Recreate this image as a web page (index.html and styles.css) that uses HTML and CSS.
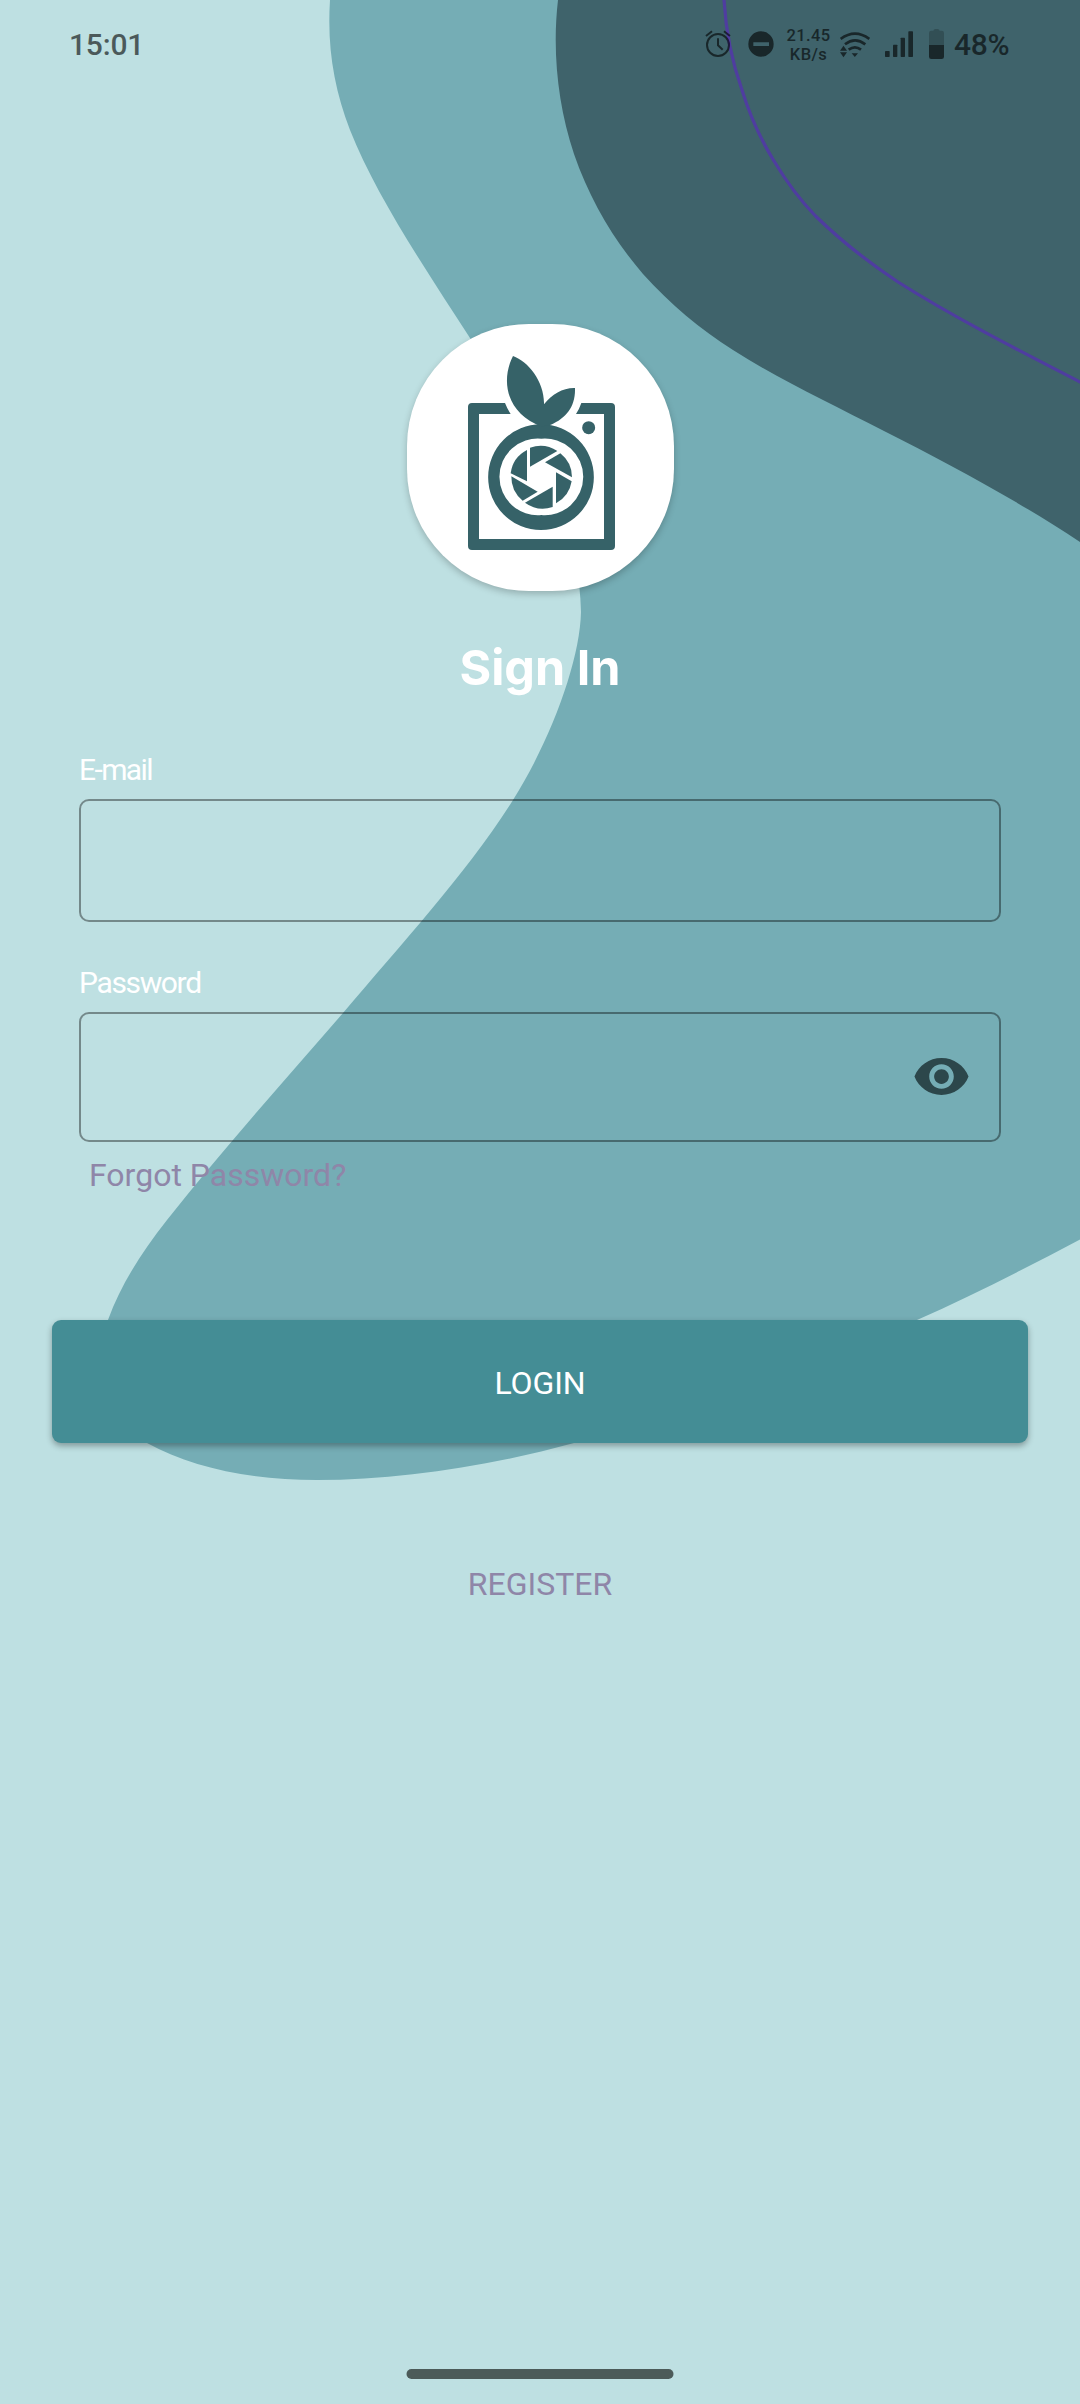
FILE: index.html
```html
<!DOCTYPE html>
<html lang="en">
<head>
<meta charset="utf-8">
<title>Sign In</title>
<link rel="stylesheet" href="styles.css">
</head>
<body>
<div class="screen">
  <svg class="backdrop" viewBox="0 0 1080 2404" aria-hidden="true">
    <path class="wave-mid" d="M330 0C327 48 334 88 350 130C376 196 428 273 470 338C535 438 579 520 581 612C580 660 552 738 513 800C466 874 402 943 343 1013C285 1080 222 1150 167 1220C142 1252 121 1284 108 1320C92 1366 98 1414 147 1443C192 1468 252 1480 317 1480C400 1480 490 1466 574 1443C690 1412 805 1371 917 1320C971 1296 1026 1268 1080 1239.5V0Z"/>
    <path class="wave-dark" d="M558 0C552 52 558 106 574 154C590 200 613 239 643 274C670 304 700 329 733 350C780 380 832 404 884 431C953 466 1020 502 1080 542V0Z"/>
    <path class="wave-line" d="M724 -2V0C726 33 732 62 742 90C750 116 761 140 774 161C786 181 800 200 815.5 216C840 240 868 262 898 282C955 318 1018 350 1082 383"/>
  </svg>

  <header class="status-bar">
    <span class="clock">15:01</span>
    <div class="status-icons">
      <svg class="alarm" viewBox="75 90 78 84">
        <g fill="none" stroke="#000" stroke-width="6">
          <circle cx="114" cy="135" r="33"/>
          <path d="M114 115V136L128 149"/>
          <path d="M78 108L96 94M150 108L132 94"/>
        </g>
      </svg>
      <svg class="dnd" viewBox="204 93 78 78">
        <path fill-rule="evenodd" d="M243 94a38 38 0 1 0 0 76a38 38 0 1 0 0-76ZM220 127H267V138H220Z"/>
      </svg>
      <div class="speed"><span>21.45</span><span>KB/s</span></div>
      <svg class="wifi" viewBox="480 90 90 81">
        <g fill="none" stroke="#000" stroke-width="8">
          <path d="M482 114Q525 82 568 114"/>
          <path d="M495 130Q525 106 556 130"/>
          <path d="M506 146Q525 132 543 146"/>
        </g>
        <path d="M515 157H534L524.500 168ZM480 149L490.500 134L501 149ZM480 154H501L490.500 169Z"/>
      </svg>
      <svg class="signal" viewBox="615 93 84 78">
        <rect x="615" y="153" width="14" height="18" rx="2"/>
        <rect x="639" y="134" width="13" height="37" rx="2"/>
        <rect x="662" y="113" width="13" height="58" rx="2"/>
        <rect x="685" y="94" width="14" height="77" rx="2"/>
      </svg>
      <svg class="battery" viewBox="747 87 45 90">
        <path fill-opacity=".33" d="M747 135V99Q747 92 754 92H760Q761 87 766 87H773Q778 87 779 92H785Q792 92 792 99V135Z"/>
        <path d="M747 135H792V170Q792 177 785 177H754Q747 177 747 170Z"/>
      </svg>
      <span class="percent">48%</span>
    </div>
  </header>

  <main class="content">
    <div class="logo">
      <svg viewBox="51 42 801 801" aria-label="Logo">
        <g fill="#366268">
          <path d="M345 279H246Q234 279 234 291V708Q234 720 246 720H663Q675 720 675 708V291Q675 279 663 279H574Q568 297 558 312H642V687H267V312H362Q352 297 345 279Z"/>
          <path fill-rule="evenodd" d="M453 343a158 158 0 1 0 0 317a158 158 0 1 0 0-317ZM454 386a115 115 0 1 1 0 229a115 115 0 1 1 0-229Z"/>
          <path d="M369 138C415 154 464 216 462 283C487 252 518 233 555 234C557 290 528 325 483 344L453 350L437 342C350 301 332 212 369 138Z"/>
          <circle cx="596" cy="353" r="19.500"/>
          <path d="M420 413A92 92 0 0 1 502 423L420 470Z"/>
          <path d="M511 430A92 92 0 0 1 546 502L465 457Z"/>
          <path d="M498 487L545 514A92 92 0 0 1 498 580Z"/>
          <path d="M488 530V591A92 92 0 0 1 405 578Z"/>
          <path d="M364 499L443 545L398 572A92 92 0 0 1 364 499Z"/>
          <path d="M411 420V514L362 490A92 92 0 0 1 411 420Z"/>
        </g>
      </svg>
    </div>
    <h1 class="title">Sign In</h1>

    <form class="form">
      <label class="label label-email" for="email">E-mail</label>
      <div class="field field-email"><input id="email" type="email"></div>
      <label class="label label-password" for="password">Password</label>
      <div class="field field-password">
        <input id="password" type="password">
        <svg class="eye" viewBox="0 0 24 24"><path d="M12 4.500C7 4.500 2.730 7.610 1 12c1.730 4.390 6 7.500 11 7.500s9.270-3.110 11-7.500c-1.730-4.390-6-7.500-11-7.500zM12 17c-2.760 0-5-2.240-5-5s2.240-5 5-5 5 2.240 5 5-2.240 5-5 5zm0-8c-1.660 0-3 1.340-3 3s1.340 3 3 3 3-1.340 3-3-1.340-3-3-3z"/></svg>
      </div>
      <a class="forgot">Forgot Password?</a>
    </form>

    <button class="login" type="button">LOGIN</button>
    <a class="register">REGISTER</a>
  </main>

  <div class="home-indicator"></div>
</div>
</body>
</html>
```
FILE: styles.css
```css
* {
  box-sizing: border-box;
}

body {
  margin: 0;
  font-family: Roboto, "Liberation Sans", sans-serif;
}

.screen {
  position: relative;
  isolation: isolate;
  display: flex;
  flex-direction: column;
  width: 1080px;
  height: 2404px;
  overflow: hidden;
  background: #bee0e2;
}

.backdrop {
  position: absolute;
  inset: 0;
  z-index: -1;
  width: 1080px;
  height: 2404px;
}

.wave-mid { fill: #75adb5; }
.wave-dark { fill: #3f636b; }

.wave-line {
  fill: none;
  stroke: #4f3da0;
  stroke-width: 3.2;
}

.status-bar {
  display: flex;
  justify-content: space-between;
  align-items: center;
  height: 88px;
  padding: 0 70px 0 69px;
  color: #000;
  opacity: 0.6;
}

.clock,
.percent {
  padding-top: 2px;
  font-size: 30px;
  font-weight: 500;
  line-height: 36px;
}

.clock {
  letter-spacing: -0.2px;
}

.status-icons {
  display: flex;
  align-items: center;
}

.status-icons svg {
  display: block;
  flex: none;
}

.alarm { width: 26px; height: 28px; margin-right: 17px; }
.dnd { width: 26px; height: 26px; margin-right: 12px; }
.wifi { width: 30px; height: 27px; margin-right: 15px; }
.signal { width: 28px; height: 26px; margin-right: 16px; }
.battery { width: 15px; height: 30px; margin-right: 10px; }

.percent {
  width: 56px;
  letter-spacing: -0.3px;
  white-space: nowrap;
}

.speed {
  display: flex;
  flex-direction: column;
  align-items: center;
  width: 45px;
  margin-right: 9px;
  padding-top: 1px;
  font-size: 16.5px;
  font-weight: 500;
  line-height: 19px;
  letter-spacing: 0.4px;
}

.content {
  display: flex;
  flex-direction: column;
  align-items: center;
  flex: 1;
  padding-top: 236px;
}

.logo {
  width: 267px;
  height: 267px;
  border-radius: 122px;
  background: #fff;
  box-shadow: 0 3px 7px rgba(0, 0, 0, 0.22);
}

.logo svg {
  display: block;
  width: 267px;
  height: 267px;
}

.title {
  margin: 47px 0 0;
  color: #fff;
  font-family: Inter, "Liberation Sans", sans-serif;
  font-size: 48.5px;
  font-weight: 700;
  line-height: 60px;
}

.form {
  display: flex;
  flex-direction: column;
  width: 922px;
  margin-top: 53px;
}

.label {
  margin-bottom: 10px;
  color: #fff;
  font-size: 30px;
  line-height: 38px;
}

.label-email {
  letter-spacing: -1.6px;
}

.label-password {
  margin-top: 42px;
  letter-spacing: -1.35px;
}

.field {
  display: flex;
  align-items: center;
  border: 2px solid rgba(0, 0, 0, 0.39);
  border-radius: 10px;
}

.field input {
  flex: 1;
  height: 100%;
  padding: 0 24px;
  border: 0;
  outline: 0;
  background: transparent;
  font: inherit;
  font-size: 32px;
}

.field-email { height: 123px; }

.field-password {
  height: 130px;
  padding-right: 28px;
}

.eye {
  width: 59px;
  height: 59px;
  margin-bottom: 1px;
  fill: #2c474b;
}

.forgot {
  align-self: flex-start;
  margin: 13px 0 0 10px;
  font-size: 32px;
  line-height: 40px;
}

.forgot,
.register {
  color: #8f86a8;
}

.login {
  width: 976px;
  height: 123px;
  margin-top: 125px;
  padding: 3px 0 0;
  border: 0;
  border-radius: 9px;
  background: #448d95;
  box-shadow: 0 3px 6px rgba(0, 0, 0, 0.32);
  color: #fff;
  font: 400 32px/40px Roboto, "Liberation Sans", sans-serif;
  letter-spacing: -0.1px;
}

.register {
  margin-top: 121px;
  font-size: 32px;
  line-height: 40px;
}

.home-indicator {
  width: 267px;
  height: 10px;
  margin: 0 auto 25px;
  transform: translateX(-0.5px);
  border-radius: 5px;
  background: #4c5b59;
}
```
